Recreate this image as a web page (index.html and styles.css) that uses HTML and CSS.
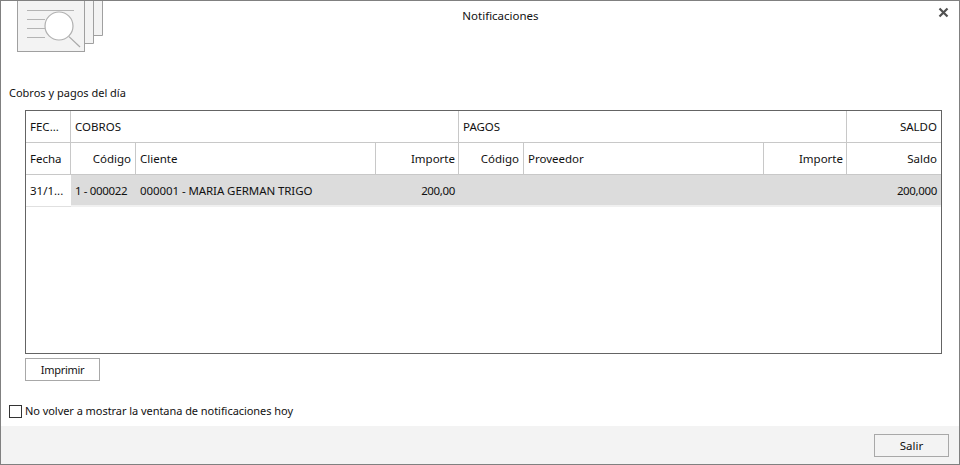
FILE: index.html
```html
<!DOCTYPE html>
<html lang="es">
<head>
    <meta charset="UTF-8">
    <title>Notificaciones</title>
    <link rel="stylesheet" href="styles.css">
</head>
<body>
    <div class="window">
        <div class="head">
            <svg class="logo" width="88" height="52" viewBox="0 0 88 52">
                <path d="M76.5 0V34.5H85.5V0" fill="#f3f3f3" stroke="#a0a0a0"/>
                <path d="M67.5 0V42.5H76.5V0" fill="#f3f3f3" stroke="#a0a0a0"/>
                <rect x="0.5" y="-2" width="67" height="52.5" fill="#f3f3f3" stroke="#a0a0a0"/>
                <path d="M10 9.5H57M10 18.5H28M10 27.5H28M10 36.5H28" stroke="#b4b4b4" fill="none"/>
                <circle cx="42" cy="25" r="14" fill="#fff" stroke="#b0b0b0" stroke-width="1.2"/>
                <path d="M52 35.6L63 46" stroke="#a8a8a8" stroke-width="1.2" fill="none"/>
            </svg>
            <div class="title">Notificaciones</div>
            <svg class="close" width="11" height="11" viewBox="0 0 11 11">
                <path d="M1.5 1.5L9.5 9.5M9.5 1.5L1.5 9.5" stroke="#505050" stroke-width="2.2" fill="none"/>
            </svg>
        </div>
        <div class="section-label">Cobros y pagos del día</div>
        <div class="grid-box">
            <div class="grid">
                <div class="cell">FEC...</div>
                <div class="cell span-3">COBROS</div>
                <div class="cell span-3">PAGOS</div>
                <div class="cell right last">SALDO</div>

                <div class="cell">Fecha</div>
                <div class="cell right">Código</div>
                <div class="cell">Cliente</div>
                <div class="cell right amount">Importe</div>
                <div class="cell right">Código</div>
                <div class="cell">Proveedor</div>
                <div class="cell right amount">Importe</div>
                <div class="cell right last">Saldo</div>

                <div class="cell row-date">31/1...</div>
                <div class="cell row-cell number">1 - 000022</div>
                <div class="cell row-cell name">000001 - MARIA GERMAN TRIGO</div>
                <div class="cell row-cell right number">200,00</div>
                <div class="cell row-cell"></div>
                <div class="cell row-cell"></div>
                <div class="cell row-cell"></div>
                <div class="cell row-cell right last number">200,000</div>
            </div>
        </div>
        <button class="btn print-btn">Imprimir</button>
        <label class="check-line">
            <span class="check"></span>
            No volver a mostrar la ventana de notificaciones hoy
        </label>
        <div class="footer">
            <button class="btn">Salir</button>
        </div>
    </div>
</body>
</html>
```

FILE: styles.css
```css
html, body {
    margin: 0;
    padding: 0;
}
body {
    font-family: "Noto Sans", Arial, sans-serif;
    font-size: 11.5px;
    color: #111;
    background: #fff;
}
.window {
    display: flex;
    flex-direction: column;
    width: 960px;
    height: 465px;
    box-sizing: border-box;
    border: 1px solid #808080;
}
.head {
    display: flex;
    height: 52px;
}
.logo {
    margin-left: 16px;
    flex: none;
}
.title {
    flex: 1;
    height: 16px;
    padding-top: 7px;
    line-height: 16px;
    text-align: center;
}
.close {
    flex: none;
    margin: 6px 10px 0 42px;
}
.section-label {
    margin: 32px 0 0 8px;
    font-size: 11px;
    line-height: 16px;
}
.grid-box {
    height: 244px;
    margin: 9px 17px 0 24px;
    box-sizing: border-box;
    border: 1px solid #646464;
}
.grid {
    display: grid;
    grid-template-columns: 45px 65px 240px 83px 65px 240px 83px 94px;
    grid-auto-rows: 32px;
}
.cell {
    padding: 0 4px;
    line-height: 31px;
    white-space: nowrap;
    overflow: hidden;
    box-sizing: border-box;
    border-right: 1px solid #c8c8c8;
    border-bottom: 1px solid #c8c8c8;
}
.span-3 {
    grid-column: span 3;
}
.right {
    text-align: right;
}
.amount {
    padding-right: 3px;
}
.last {
    border-right: 0;
    padding-right: 4px;
}
.row-date {
    border-right: 0;
    border-bottom: 1px solid #e0e0e0;
}
.row-cell {
    background: #dcdcdc;
    border-right: 0;
    border-bottom: 2px solid #f0f0f0;
    overflow: visible;
}
.number {
    letter-spacing: -0.35px;
}
.name {
    letter-spacing: -0.08px;
}
.btn {
    width: 75px;
    height: 23px;
    padding: 0;
    font: inherit;
    color: inherit;
    background: transparent;
    border: 1px solid #a8a8a8;
}
.print-btn {
    margin: 4px 0 0 24px;
    font-size: 11px;
    letter-spacing: -0.3px;
}
.check-line {
    display: flex;
    align-items: center;
    gap: 3px;
    margin: 22px 0 0 8px;
    font-size: 11px;
    line-height: 16px;
    letter-spacing: -0.05px;
}
.check {
    width: 11px;
    height: 11px;
    border: 1px solid #333;
}
.footer {
    display: flex;
    justify-content: flex-end;
    align-items: center;
    margin-top: 7px;
    flex: 1;
    padding-right: 10px;
    background: #f3f3f3;
}
```
